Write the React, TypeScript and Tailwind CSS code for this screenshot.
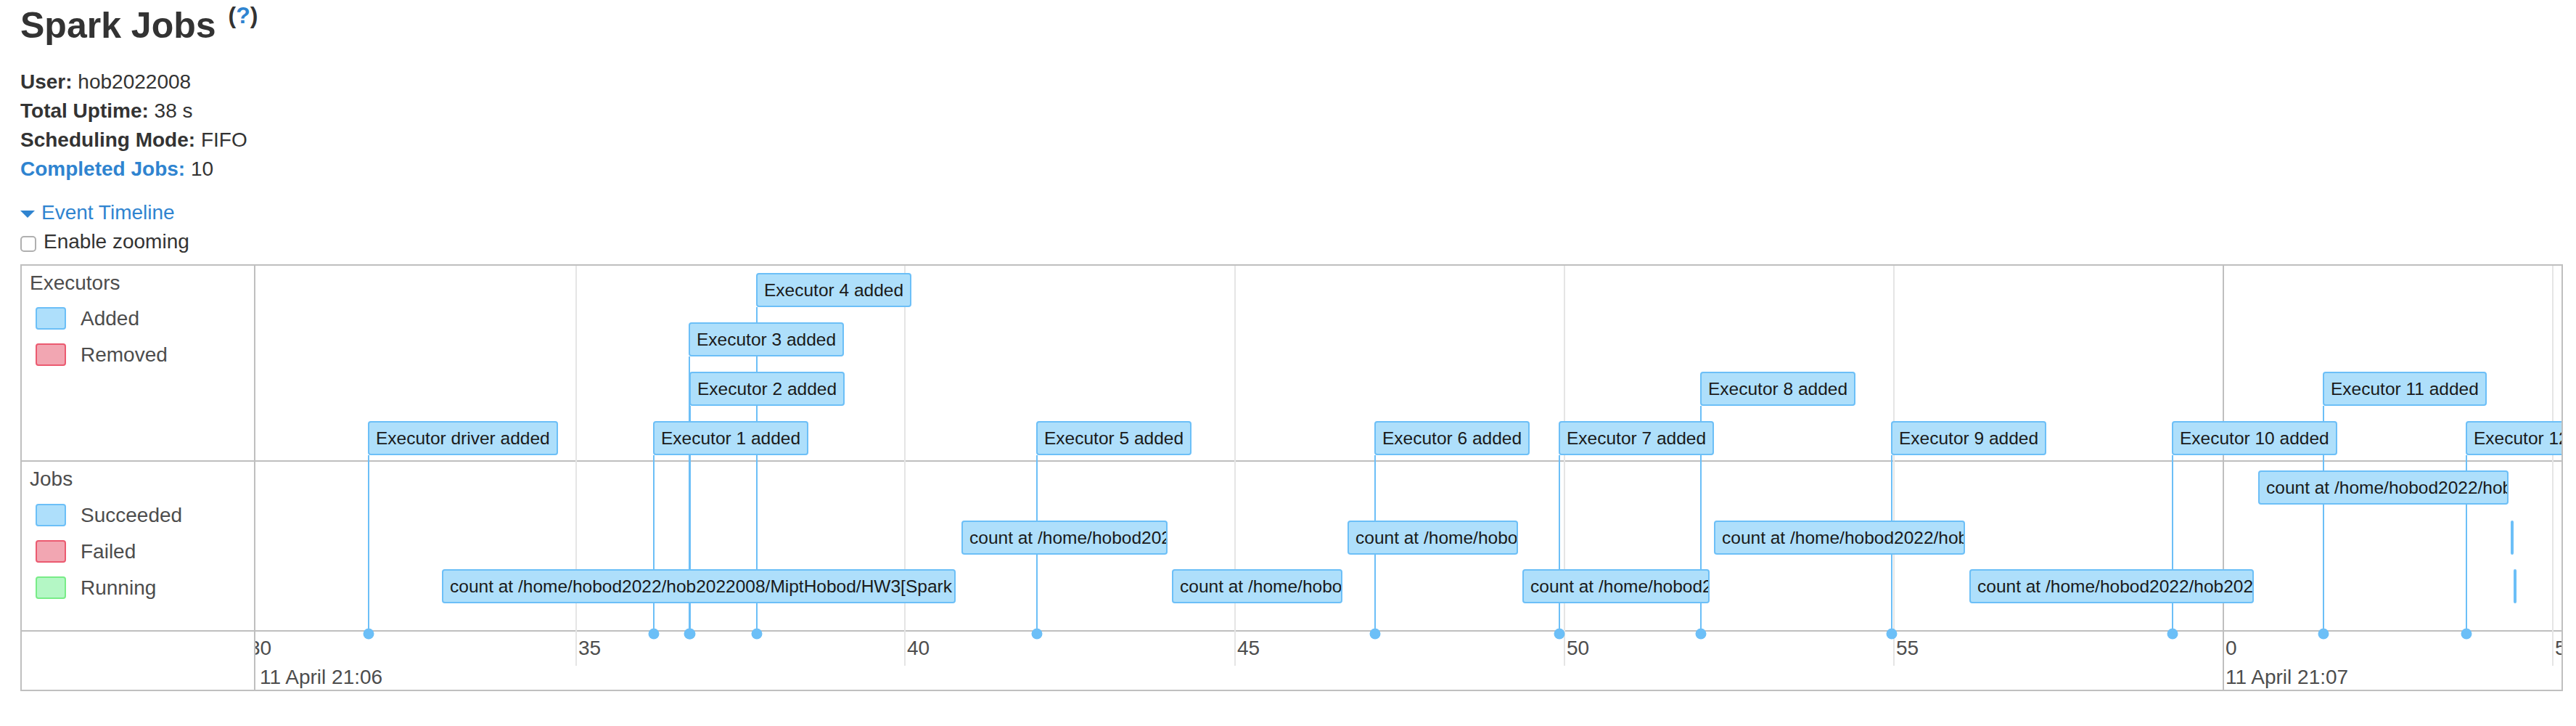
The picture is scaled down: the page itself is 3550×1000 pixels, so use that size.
type ExecEvent = { label: string; x: number; top: number };
type Job = { x: number; w: number; top: number };
type Legend = { label: string; fill: string };

// positions are px inside the timeline's center panel
const executors: ExecEvent[] = [
  { label: "Executor driver added", x: 155, top: 214 },
  { label: "Executor 1 added", x: 548, top: 214 },
  { label: "Executor 2 added", x: 598, top: 146 },
  { label: "Executor 3 added", x: 597, top: 78 },
  { label: "Executor 4 added", x: 690, top: 10 },
  { label: "Executor 5 added", x: 1076, top: 214 },
  { label: "Executor 6 added", x: 1542, top: 214 },
  { label: "Executor 7 added", x: 1796, top: 214 },
  { label: "Executor 8 added", x: 1991, top: 146 },
  { label: "Executor 9 added", x: 2254, top: 214 },
  { label: "Executor 10 added", x: 2641, top: 214 },
  { label: "Executor 11 added", x: 2849, top: 146 },
  { label: "Executor 12 added", x: 3046, top: 214 },
];

const jobs: Job[] = [
  { x: 257, w: 708, top: 418 },
  { x: 973, w: 284, top: 351 },
  { x: 1263, w: 235, top: 418 },
  { x: 1505, w: 235, top: 351 },
  { x: 1746, w: 258, top: 418 },
  { x: 2010, w: 346, top: 351 },
  { x: 2362, w: 392, top: 418 },
  { x: 2760, w: 345, top: 282 },
  { x: 3108, w: 4, top: 351 },
  { x: 3112, w: 4, top: 418 },
];

const jobLabel = "count at /home/hobod2022/hob2022008/MiptHobod/HW3[Spark";

const minorTicks = [
  { x: 441, label: "35" },
  { x: 894, label: "40" },
  { x: 1349, label: "45" },
  { x: 1803, label: "50" },
  { x: 2257, label: "55" },
  { x: 3165, label: "5" },
];

const majorTicks = [
  { x: -13, label: "30", dateX: 6, date: "11 April 21:06" },
  { x: 2711, label: "0", dateX: 2715, date: "11 April 21:07" },
];

const AXIS_Y = 507;

const executorLegend: Legend[] = [
  { label: "Added", fill: "bg-[#aedffb] border-[#6cbff7]" },
  { label: "Removed", fill: "bg-[#f2a6b2] border-[#eb5a70]" },
];

const jobLegend: Legend[] = [
  { label: "Succeeded", fill: "bg-[#aedffb] border-[#6cbff7]" },
  { label: "Failed", fill: "bg-[#f2a6b2] border-[#eb5a70]" },
  { label: "Running", fill: "bg-[#b4f7c5] border-[#78ec87]" },
];

function LegendBlock({ title, items, gap }: { title: string; items: Legend[]; gap: string }) {
  return (
    <div className="pl-[11px] pt-[4px] text-[#4d4d4d]">
      <div className="text-[28px] leading-[40px]">{title}</div>
      <div className={`flex flex-col gap-[19px] pl-[8px] ${gap}`}>
        {items.map((it) => (
          <div key={it.label} className="flex items-start gap-[20px]">
            <span className={`h-[31px] w-[42px] rounded-[4px] border-2 ${it.fill}`} />
            <span className="text-[28px] leading-[31px]">{it.label}</span>
          </div>
        ))}
      </div>
    </div>
  );
}

function Timeline() {
  return (
    <div className="mt-[11px] flex w-[3504px] border-2 border-[#bfbfbf]">
      <div className="flex w-[320px] flex-col">
        <div className="h-[270px] border-b-2 border-[#bfbfbf]">
          <LegendBlock title="Executors" items={executorLegend} gap="mt-[13px]" />
        </div>
        <div className="h-[234px] border-b-2 border-[#bfbfbf]">
          <LegendBlock title="Jobs" items={jobLegend} gap="mt-[14px]" />
        </div>
        <div className="h-[80px]" />
      </div>

      <div className="relative flex-1 overflow-hidden border-l-2 border-[#bfbfbf]">
        <div className="h-[270px] border-b-2 border-[#bfbfbf]" />
        <div className="h-[234px] border-b-2 border-[#bfbfbf]" />
        <div className="h-[80px]" />

        {minorTicks.map((t) => (
          <div key={t.label}>
            <div
              className="absolute top-0 h-[551px] w-[2px] bg-[#e5e5e5]"
              style={{ left: t.x }}
            />
            <div
              className="absolute top-[513px] text-[28px] leading-[28px] text-[#4d4d4d]"
              style={{ left: t.x + 4 }}
            >
              {t.label}
            </div>
          </div>
        ))}

        {majorTicks.map((t) => (
          <div key={t.label}>
            <div
              className="absolute top-0 h-full w-[2px] bg-[#bfbfbf]"
              style={{ left: t.x }}
            />
            <div
              className="absolute top-[513px] text-[28px] leading-[28px] text-[#4d4d4d]"
              style={{ left: t.x + 4 }}
            >
              {t.label}
            </div>
            <div
              className="absolute top-[553px] whitespace-nowrap text-[28px] leading-[28px] text-[#4d4d4d]"
              style={{ left: t.dateX }}
            >
              {t.date}
            </div>
          </div>
        ))}

        {executors.map((e) => (
          <div key={e.label}>
            <div
              className="absolute z-10 w-[2px] bg-[#6cbff7]"
              style={{ left: e.x, top: e.top + 47, height: AXIS_Y - e.top - 47 }}
            />
            <div
              className="absolute z-10 h-[15px] w-[15px] -translate-x-1/2 -translate-y-1/2 rounded-full bg-[#6cbff7]"
              style={{ left: e.x + 1, top: AXIS_Y }}
            />
          </div>
        ))}

        {jobs.map((j, i) => (
          <div
            key={i}
            className="absolute z-20 h-[47px] overflow-hidden whitespace-nowrap rounded-[4px] border-2 border-[#6cbff7] bg-[#aedffb] py-[5px] pl-[9px] text-[24.5px] leading-[33px] text-[#1a1a1a]"
            style={{ left: j.x, top: j.top, width: j.w, paddingLeft: j.w < 10 ? 0 : undefined }}
          >
            {j.w < 10 ? null : jobLabel}
          </div>
        ))}

        {executors.map((e) => (
          <div
            key={e.label}
            className="absolute z-20 whitespace-nowrap rounded-[4px] border-2 border-[#6cbff7] bg-[#aedffb] px-[9px] py-[5px] text-[24.5px] leading-[33px] text-[#1a1a1a]"
            style={{ left: e.x, top: e.top }}
          >
            {e.label}
          </div>
        ))}
      </div>
    </div>
  );
}

export default function App() {
  return (
    <div className="min-h-[1000px] w-[3550px] bg-white pl-[28px] pt-[5px] font-['Liberation_Sans',Arial,sans-serif] text-[#333]">
      <div className="flex h-[60px] items-start">
        <h3 className="text-[50px] font-bold leading-[60px]">Spark Jobs</h3>
        <span className="ml-[17px] text-[32px] font-bold leading-[32px]">
          (<span className="text-[#2f84d0]">?</span>)
        </span>
      </div>

      <ul className="mt-[28px] text-[28px] leading-[40px]">
        <li>
          <strong>User:</strong> hob2022008
        </li>
        <li>
          <strong>Total Uptime:</strong> 38 s
        </li>
        <li>
          <strong>Scheduling Mode:</strong> FIFO
        </li>
        <li>
          <a className="font-bold text-[#2f84d0]">Completed Jobs:</a> 10
        </li>
      </ul>

      <div className="mt-[20px] flex items-center gap-[9px] text-[28px] leading-[40px] text-[#2f84d0]">
        <svg width="20" height="10" viewBox="0 0 20 10" className="mt-[3px]">
          <path d="M0 0h20L10 10z" fill="#2f84d0" />
        </svg>
        <span>Event Timeline</span>
      </div>

      <label className="flex items-center gap-[10px] text-[28px] leading-[40px]">
        <input
          type="checkbox"
          className="mt-[6px] h-[22px] w-[22px] appearance-none rounded-[5px] border-2 border-[#b0b0b0] bg-white"
        />
        <span>Enable zooming</span>
      </label>

      <Timeline />
    </div>
  );
}
